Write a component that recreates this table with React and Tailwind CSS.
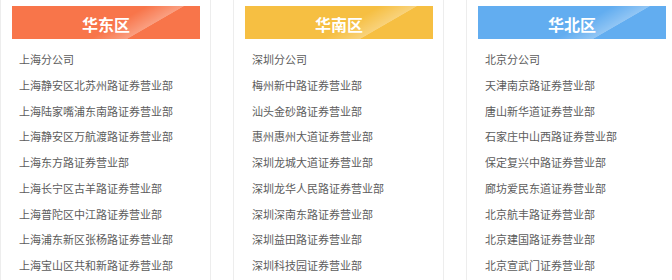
const regions = [
  {
    title: "华东区",
    color: "bg-[#f8754a]",
    items: [
      "上海分公司",
      "上海静安区北苏州路证券营业部",
      "上海陆家嘴浦东南路证券营业部",
      "上海静安区万航渡路证券营业部",
      "上海东方路证券营业部",
      "上海长宁区古羊路证券营业部",
      "上海普陀区中江路证券营业部",
      "上海浦东新区张杨路证券营业部",
      "上海宝山区共和新路证券营业部",
    ],
  },
  {
    title: "华南区",
    color: "bg-[#f6bf42]",
    items: [
      "深圳分公司",
      "梅州新中路证券营业部",
      "汕头金砂路证券营业部",
      "惠州惠州大道证券营业部",
      "深圳龙城大道证券营业部",
      "深圳龙华人民路证券营业部",
      "深圳深南东路证券营业部",
      "深圳益田路证券营业部",
      "深圳科技园证券营业部",
    ],
  },
  {
    title: "华北区",
    color: "bg-[#62adf0]",
    items: [
      "北京分公司",
      "天津南京路证券营业部",
      "唐山新华道证券营业部",
      "石家庄中山西路证券营业部",
      "保定复兴中路证券营业部",
      "廊坊爱民东道证券营业部",
      "北京航丰路证券营业部",
      "北京建国路证券营业部",
      "北京宣武门证券营业部",
    ],
  },
];

function RegionCard({ region }) {
  return (
    <div className="w-[211px] shrink-0 border-x border-[#ededed] bg-white pt-[6px] pl-[11px] pr-[10px]">
      <div className={`relative h-[33px] ${region.color} flex items-center justify-center overflow-hidden`}>
        {/* gloss in the top-right corner */}
        <div className="absolute inset-0 bg-[linear-gradient(150deg,rgba(255,255,255,0)_55%,rgba(255,255,255,0.3)_70%,rgba(255,255,255,0)_70.5%)]" />
        <span className="relative text-white text-[16px] font-bold leading-none pt-[2px]">{region.title}</span>
      </div>
      <ul className="mt-[8px] pl-[7px]">
        {region.items.map((item) => (
          <li key={item} className="h-[25.75px] leading-[25.75px] text-[11px] text-[#5c5c5c] whitespace-nowrap">
            {item}
          </li>
        ))}
      </ul>
    </div>
  );
}

export default function App() {
  return (
    <div
      className="w-[672px] h-[280px] overflow-hidden bg-white flex gap-[22px]"
      style={{ fontFamily: '"Noto Sans CJK SC", "Noto Sans", sans-serif' }}
    >
      {regions.map((r) => (
        <RegionCard key={r.title} region={r} />
      ))}
    </div>
  );
}
